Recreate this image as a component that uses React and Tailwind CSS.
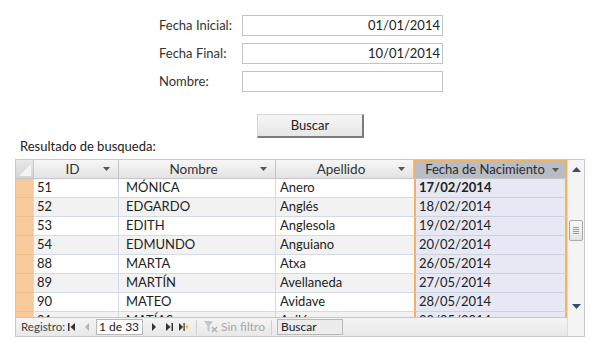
const rows = [
  ["51", "MÓNICA", "Anero", "17/02/2014"],
  ["52", "EDGARDO", "Anglés", "18/02/2014"],
  ["53", "EDITH", "Anglesola", "19/02/2014"],
  ["54", "EDMUNDO", "Anguiano", "20/02/2014"],
  ["88", "MARTA", "Atxa", "26/05/2014"],
  ["89", "MARTÍN", "Avellaneda", "27/05/2014"],
  ["90", "MATEO", "Avidave", "28/05/2014"],
  ["91", "MATÍAS", "Avilés", "29/05/2014"],
];

function DropArrow() {
  return (
    <svg width="7" height="4" viewBox="0 0 7 4" className="shrink-0">
      <path d="M0 0 L7 0 L3.5 4 Z" fill="#555" />
    </svg>
  );
}

function HeaderCell({ label, width, active }) {
  return (
    <div
      className={
        active
          ? "h-full flex items-center gap-[4px] pl-[6px] pr-[6px] bg-[#b7bcc5] border-x-2 border-t-2 border-[#f7b15a] text-[#2b2b2b] text-[13px] whitespace-nowrap"
          : "h-full flex items-center pl-2 pr-2 bg-gradient-to-b from-[#f7f7f7] to-[#e3e3e3] border-r border-[#c6c6c6] text-[#333] text-[13.5px]"
      }
      style={{ width }}
    >
      <span className="flex-1 text-center">{label}</span>
      <DropArrow />
    </div>
  );
}

function NavBtn({ w, children }) {
  return <div className={"h-full flex items-center justify-center " + w}>{children}</div>;
}

export default function App() {
  return (
    <div className="w-[600px] h-[358px] bg-white overflow-hidden text-[13px] text-[#333]" style={{ fontFamily: "Lato, 'Liberation Sans', sans-serif" }}>
      {/* filtros */}
      <div className="pt-[15px] pl-[159px] flex flex-col gap-[7px]">
        {[
          ["Fecha Inicial:", "01/01/2014"],
          ["Fecha Final:", "10/01/2014"],
          ["Nombre:", ""],
        ].map(([label, value]) => (
          <div key={label} className="flex items-center h-[21px]">
            <span className="w-[83px]">{label}</span>
            <div className="w-[201px] h-[21px] border border-[#c3c3c3] bg-white flex items-center justify-end pr-[2px] text-[#222]">
              {value}
            </div>
          </div>
        ))}
      </div>

      <div className="mt-[22px] ml-[257px] w-[107px] h-[24px] bg-gradient-to-b from-[#f6f6f6] to-[#e6e6e6] border border-[#d6d6d6] border-r-2 border-b-2 border-r-[#7c7c7c] border-b-[#7c7c7c] flex items-center justify-center text-[#222]">
        Buscar
      </div>

      <div className="pl-[20px] h-[21px] pb-[4px] flex items-center text-[#222]">Resultado de busqueda:</div>

      {/* hoja de datos */}
      <div className="ml-[15px] w-[570px] h-[178px] border border-[#c8c8c8] flex">
        <div className="w-[551px] flex flex-col">
          <div className="h-[19px] flex border-b border-[#c6c6c6] shrink-0">
            <div className="w-[18px] h-full bg-gradient-to-b from-[#e9e9e9] to-[#d3d3d3] border-r border-[#c6c6c6] flex items-end justify-end p-[2px]">
              <svg width="12" height="12" viewBox="0 0 12 12">
                <path d="M12 0 L12 12 L0 12 Z" fill="#f4f4f4" />
              </svg>
            </div>
            <HeaderCell label="ID" width={85} />
            <HeaderCell label="Nombre" width={157} />
            <HeaderCell label="Apellido" width={138} />
            <HeaderCell label="Fecha de Nacimiento" width={153} active />
          </div>

          <div className="flex-1 overflow-hidden">
            {rows.map((r, i) => (
              <div key={r[0]} className={"h-[19px] flex " + (i % 2 ? "bg-[#f2f2f2]" : "bg-white")}>
                <div className="w-[18px] h-full bg-[#f8c99a] border-b border-[#f1bd89] border-r border-r-[#d9d9d9]" />
                <div className="w-[85px] h-full pl-[3px] flex items-center border-r border-b border-[#d5dbe6] text-[#222]">{r[0]}</div>
                <div className="w-[157px] h-full pl-[7px] flex items-center border-r border-b border-[#d5dbe6] text-[#222]">{r[1]}</div>
                <div className="w-[138px] h-full pl-[4px] flex items-center border-b border-[#d5dbe6] text-[#222]">{r[2]}</div>
                <div className={"w-[153px] h-full pl-[3px] flex items-center border-x-2 border-x-[#f7b15a] border-b border-b-[#ccd2df] bg-[#e6e9f4] text-[#222] " + (i === 0 ? "font-bold" : "")}>
                  {r[3]}
                </div>
              </div>
            ))}
          </div>

          {/* barra de navegacion */}
          <div className="h-[19px] shrink-0 flex items-center bg-gradient-to-b from-[#f4f4f4] to-[#e8e8e8] border-t border-[#c6c6c6] text-[11.5px] text-[#444]">
            <span className="w-[51px] pl-[5px] whitespace-nowrap">Registro:</span>
            <NavBtn w="w-[10px]">
              <svg width="8" height="8" viewBox="0 0 8 8"><rect x="0" y="0" width="1.5" height="8" fill="#333" /><path d="M7 0 L2.5 4 L7 8 Z" fill="#333" /></svg>
            </NavBtn>
            <NavBtn w="w-[19px]">
              <svg width="6" height="8" viewBox="0 0 6 8"><path d="M5 0 L1 4 L5 8 Z" fill="#b4b4b4" /></svg>
            </NavBtn>
            <div className="w-[47px] h-[16px] bg-white border border-[#b9b9b9] pl-[2px] flex items-center text-[#222] text-[12px] whitespace-nowrap">1 de 33</div>
            <div className="w-[3px]" />
            <NavBtn w="w-[16px]">
              <svg width="6" height="8" viewBox="0 0 6 8"><path d="M1 0 L5 4 L1 8 Z" fill="#333" /></svg>
            </NavBtn>
            <NavBtn w="w-[14px]">
              <svg width="8" height="8" viewBox="0 0 8 8"><path d="M1 0 L5.5 4 L1 8 Z" fill="#333" /><rect x="6.5" y="0" width="1.5" height="8" fill="#333" /></svg>
            </NavBtn>
            <NavBtn w="w-[16px]">
              <svg width="10" height="8" viewBox="0 0 10 8"><path d="M0 0 L4 4 L0 8 Z" fill="#333" /><rect x="4.5" y="0" width="1.2" height="8" fill="#333" /><path d="M8 1 L8.7 3 L10 3.2 L8.9 4.2 L9.3 6 L8 5 L6.7 6 L7.1 4.2 L6 3.2 L7.3 3 Z" fill="#f2c21a" /></svg>
            </NavBtn>
            <div className="w-px h-[15px] bg-[#cfcfcf] ml-[4px]" />
            <div className="flex items-center gap-[3px] pl-[7px] pr-[6px] text-[#a8a8a8] text-[12px] whitespace-nowrap">
              <svg width="14" height="12" viewBox="0 0 14 12">
                <path d="M0 0 L9 0 L5.5 5 L5.5 11 L3.5 9.5 L3.5 5 Z" fill="#c2c6cc" />
                <path d="M8 6 L13 11 M13 6 L8 11" stroke="#b0b0b0" strokeWidth="1.5" />
              </svg>
              <span>Sin filtro</span>
            </div>
            <div className="w-px h-[15px] bg-[#cfcfcf]" />
            <div className="ml-[5px] w-[66px] h-[16px] bg-[#ececec] border border-[#b9b9b9] pl-[3px] flex items-center text-[#222] text-[12px]">Buscar</div>
          </div>
        </div>

        {/* barra de desplazamiento */}
        <div className="w-[18px] flex flex-col border-l border-[#dcdcdc] bg-[#f4f4f4]">
          <div className="h-[19px] flex items-center justify-center">
            <svg width="9" height="5" viewBox="0 0 9 5"><path d="M0 5 L9 5 L4.5 0 Z" fill="#3b4a66" /></svg>
          </div>
          <div className="h-[41px]" />
          <div className="mx-[1px] h-[21px] border border-[#a9a9a9] rounded-[2px] bg-gradient-to-b from-[#fbfbfb] to-[#e2e2e2] flex flex-col items-center justify-center gap-[1px]">
            <div className="w-[6px] h-px bg-[#9a9a9a]" />
            <div className="w-[6px] h-px bg-[#9a9a9a]" />
            <div className="w-[6px] h-px bg-[#9a9a9a]" />
            <div className="w-[6px] h-px bg-[#9a9a9a]" />
          </div>
          <div className="flex-1" />
          <div className="h-[19px] flex items-center justify-center">
            <svg width="9" height="5" viewBox="0 0 9 5"><path d="M0 0 L9 0 L4.5 5 Z" fill="#3b4a66" /></svg>
          </div>
          <div className="h-[20px]" />
        </div>
      </div>
    </div>
  );
}
